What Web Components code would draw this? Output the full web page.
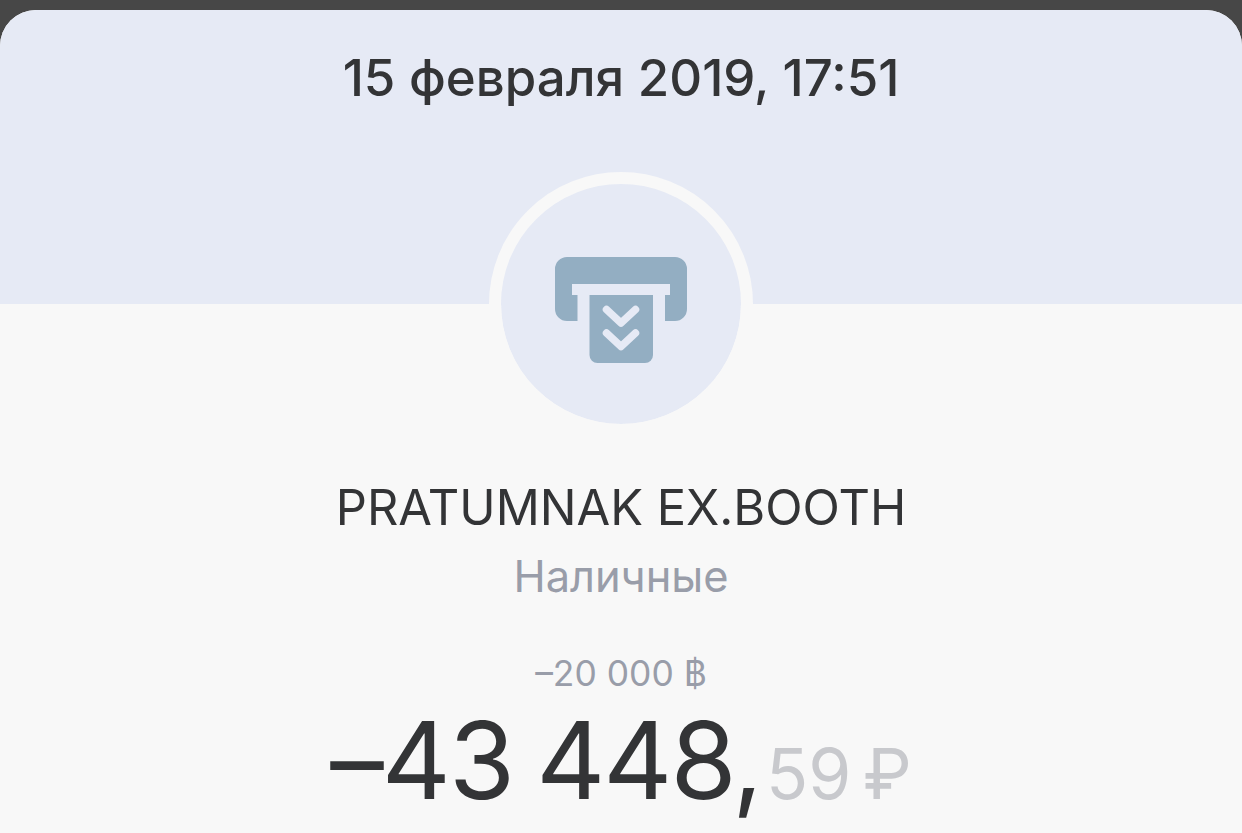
<!DOCTYPE html>
<html>
<head>
<meta charset="utf-8">
<title>Операция</title>
<style>
html, body { margin: 0; height: 100%; background: #474747; overflow: hidden; }
body { font-family: Inter, "Liberation Sans", sans-serif; }
</style>
</head>
<body>
<op-card>
	<op-header>15 февраля 2019, 17:51</op-header>
	<op-icon></op-icon>
	<op-title name="PRATUMNAK EX.BOOTH" category="Наличные"></op-title>
	<op-amount original="–20 000 ฿" whole="–43 448," cents="59" currency="₽"></op-amount>
</op-card>
<script>
class OpCard extends HTMLElement
{
	constructor ()
	{
		super();
		this.attachShadow({mode:"open"});
		this.shadowRoot.innerHTML = `
			<style>
			:host
			{
				display       : flex;
				flex-direction: column;
				height        : 823px;
				margin-top    : 10px;
				background    : #f8f8f8;
				border-radius : 36px 36px 0 0;
				overflow      : hidden;
			}
			::slotted(*) { flex: none; }
			</style>
			<slot></slot>
		`;
	}
}

class OpHeader extends HTMLElement
{
	constructor ()
	{
		super();
		this.attachShadow({mode:"open"});
		this.shadowRoot.innerHTML = `
			<style>
			:host
			{
				display     : block;
				height      : 294px;
				padding-top : 38px;
				box-sizing  : border-box;
				background  : #e6eaf5;
				color       : #333436;
				font-size   : 51px;
				font-weight : 450;
				line-height : 60px;
				text-align  : center;
			}
			</style>
			<slot></slot>
		`;
	}
}

class OpIcon extends HTMLElement
{
	constructor ()
	{
		super();
		this.attachShadow({mode:"open"});
		this.shadowRoot.innerHTML = `
			<style>
			:host
			{
				display       : flex;
				align-items   : center;
				justify-content: center;
				align-self    : center;
				width         : 240px;
				height        : 240px;
				margin-top    : -132px;
				border        : 12px solid #f8f8f8;
				border-radius : 50%;
				background    : #e6eaf5;
				background-clip: padding-box;
			}
			svg { display: block; margin-top: 12px; }
			</style>
			<svg width="132" height="106" viewBox="555 257 132 106">
				<path fill="#93aec2" d="M567 257H675A12 12 0 0 1 687 269V309A12 12 0 0 1 675 321H665V295H670V284H572V295H577.500V321H567A12 12 0 0 1 555 309V269A12 12 0 0 1 567 257Z"/>
				<path fill="#93aec2" d="M589.500 295H653V355A8 8 0 0 1 645 363H597.500A8 8 0 0 1 589.500 355Z"/>
				<path fill="none" stroke="#e6eaf5" stroke-width="7.500" stroke-linecap="round" stroke-linejoin="round" d="M606.500 309.500L621 323L635.500 309.500M606.500 333L621 346.500L635.500 333"/>
			</svg>
		`;
	}
}

class OpTitle extends HTMLElement
{
	constructor ()
	{
		super();
		this.attachShadow({mode:"open"});
		this.shadowRoot.innerHTML = `
			<style>
			:host
			{
				display        : flex;
				flex-direction : column;
				align-items    : center;
				margin-top     : 42px;
			}
			.name
			{
				color       : #333436;
				font-size   : 48.800px;
				line-height : 60px;
			}
			.category
			{
				margin-top  : 8px;
				color       : #999da9;
				font-size   : 43.400px;
				line-height : 60px;
			}
			</style>
			<div class="name"></div>
			<div class="category"></div>
		`;
	}

	connectedCallback ()
	{
		this.shadowRoot.querySelector(".name").textContent = this.getAttribute("name");
		this.shadowRoot.querySelector(".category").textContent = this.getAttribute("category");
	}
}

class OpAmount extends HTMLElement
{
	constructor ()
	{
		super();
		this.attachShadow({mode:"open"});
		this.shadowRoot.innerHTML = `
			<style>
			:host
			{
				display        : flex;
				flex-direction : column;
				align-items    : center;
				margin-top     : 44px;
			}
			.original
			{
				color         : #999da9;
				font-size     : 35.400px;
				line-height   : 48px;
				margin-bottom : 2px;
			}
			.total
			{
				display     : flex;
				align-items : baseline;
				color       : #333436;
				font-size   : 107px;
				line-height : 120px;
				white-space : pre;
			}
			.whole
			{
				letter-spacing : -2px;
				word-spacing   : -5px;
			}
			.cents
			{
				margin-left  : 5px;
				color        : #c8c9cd;
				font-size    : 69.500px;
				word-spacing : -8px;
			}
			</style>
			<div class="original"></div>
			<div class="total"><span class="whole"></span><span class="cents"></span></div>
		`;
	}

	connectedCallback ()
	{
		let root = this.shadowRoot;
		root.querySelector(".original").textContent = this.getAttribute("original");
		root.querySelector(".whole").textContent = this.getAttribute("whole");
		root.querySelector(".cents").textContent = this.getAttribute("cents") + " " + this.getAttribute("currency");
	}
}

customElements.define("op-card", OpCard);
customElements.define("op-header", OpHeader);
customElements.define("op-icon", OpIcon);
customElements.define("op-title", OpTitle);
customElements.define("op-amount", OpAmount);
</script>
</body>
</html>
